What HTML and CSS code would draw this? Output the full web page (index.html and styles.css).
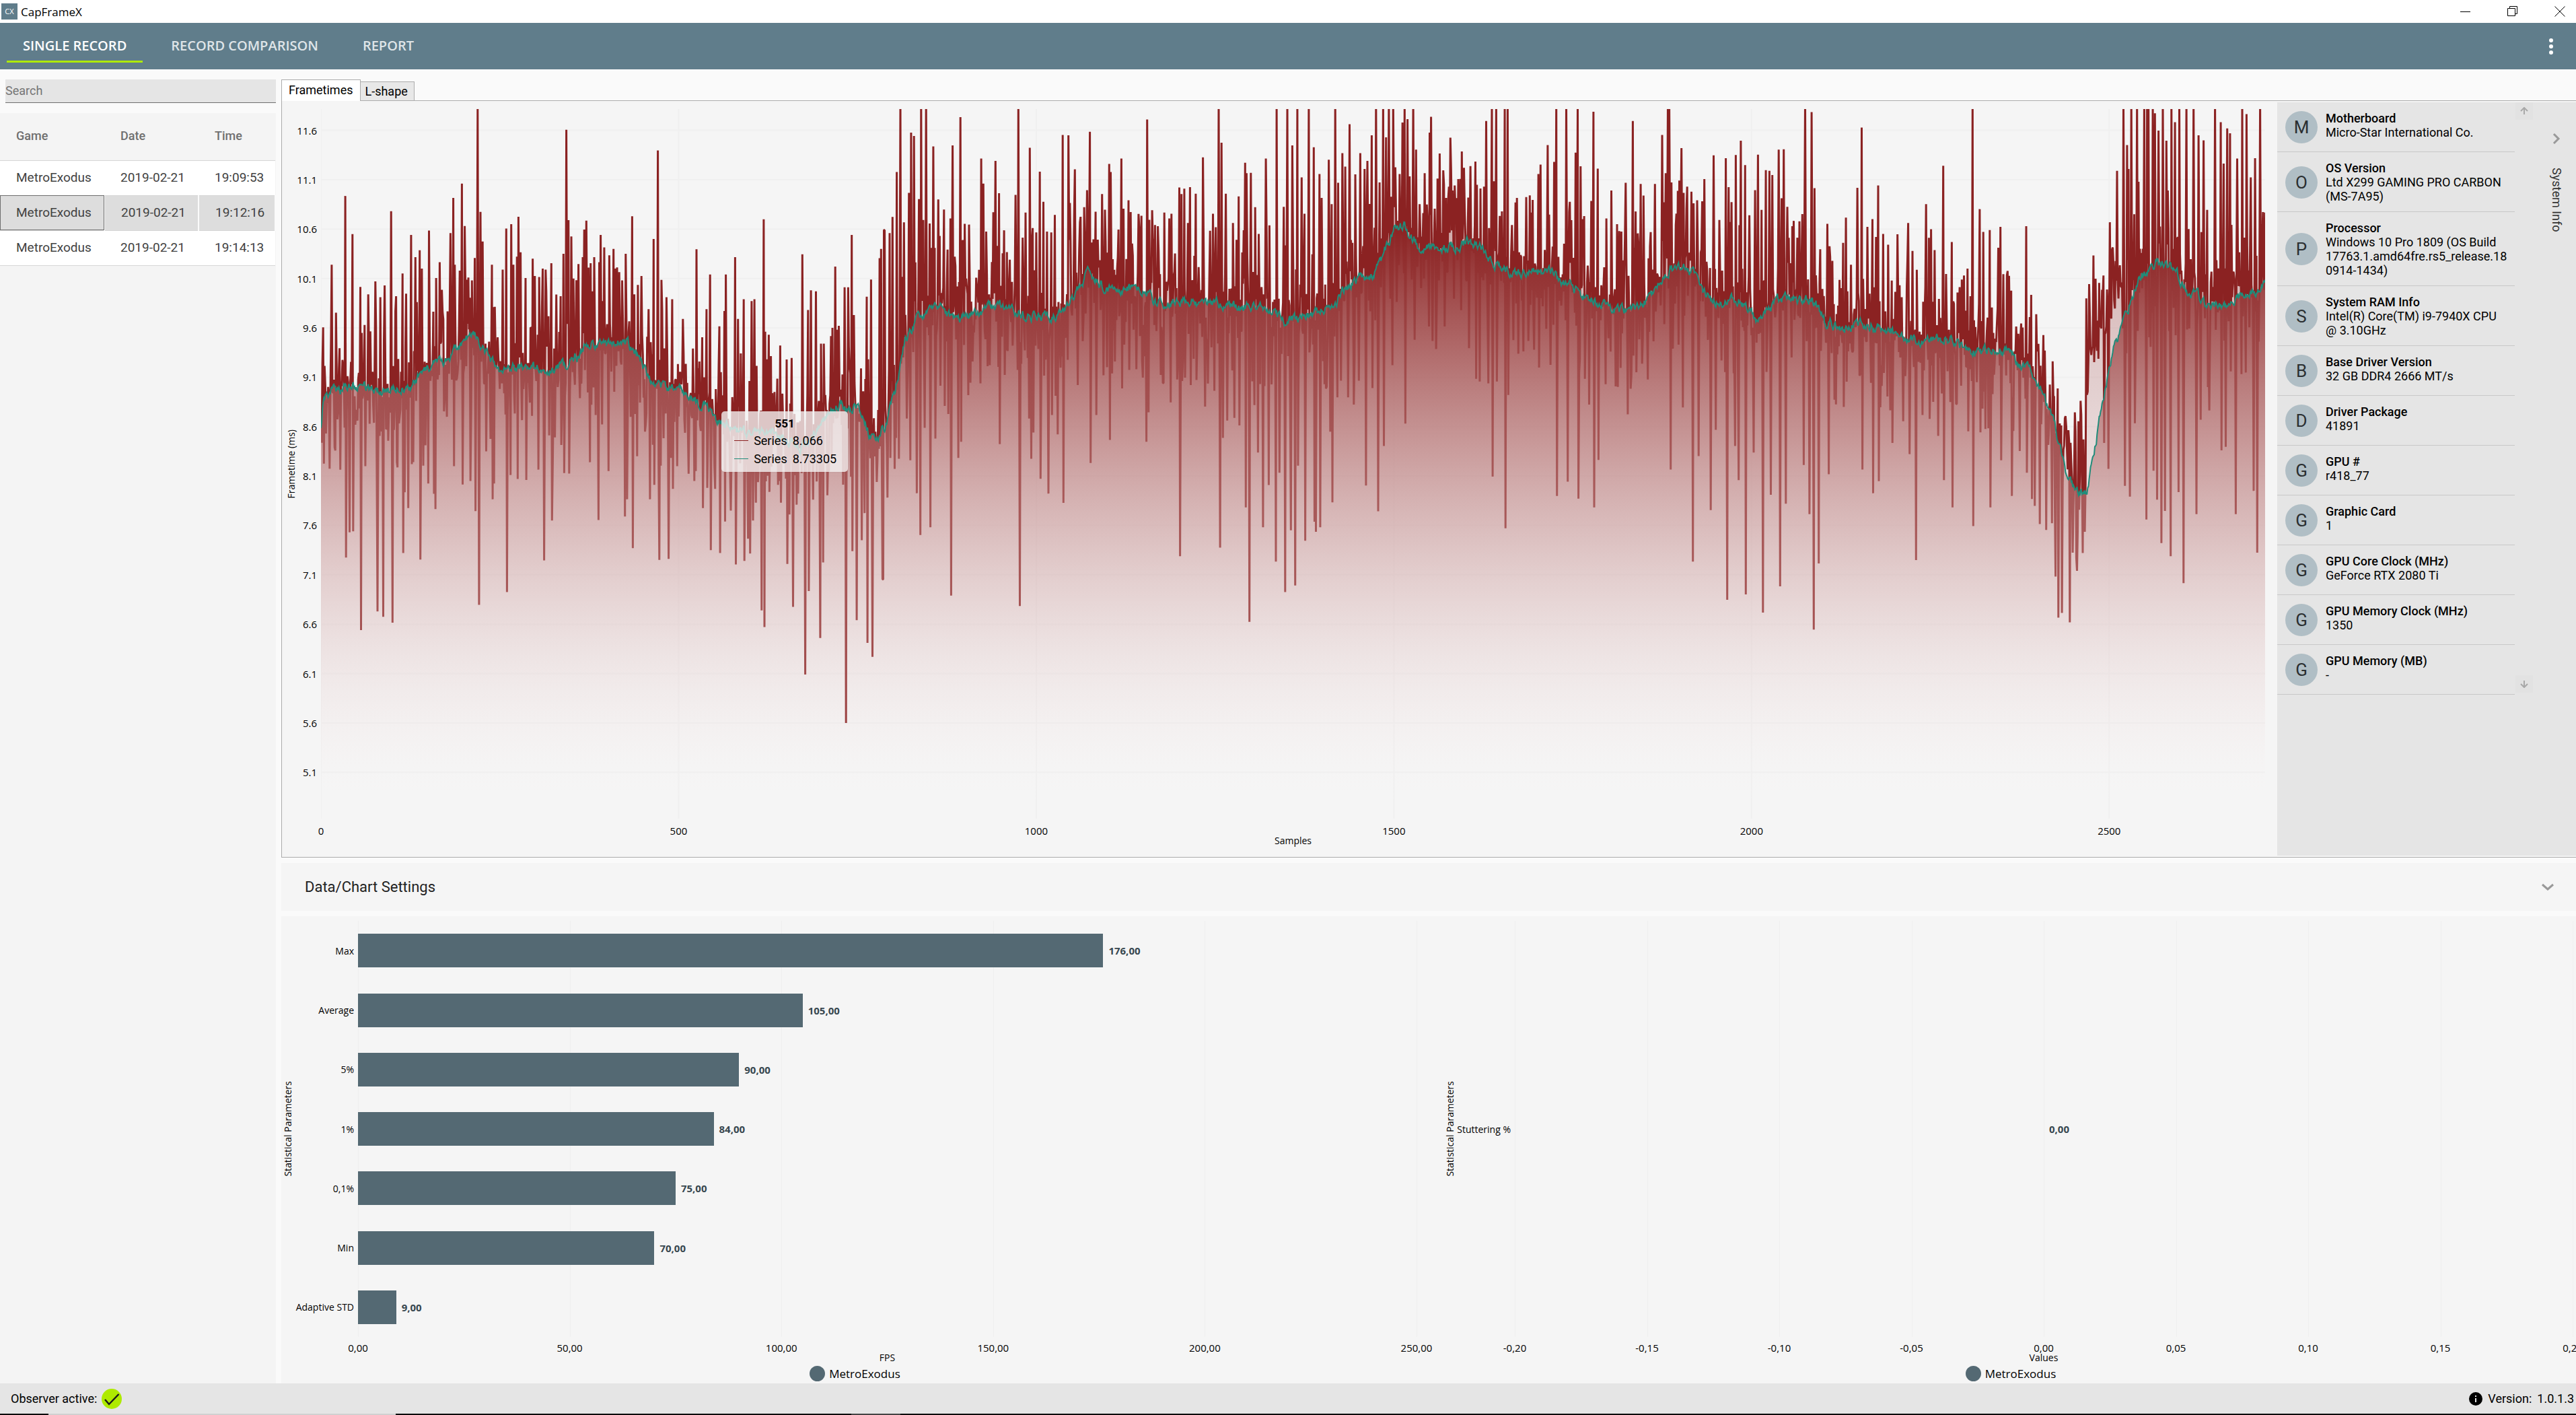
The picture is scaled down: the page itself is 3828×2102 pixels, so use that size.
FILE: index.html
```html
<!DOCTYPE html>
<html lang="en">
<head>
    <meta charset="UTF-8">
    <meta name="viewport" content="width=device-width, initial-scale=1.0">
    <title>CapFrameX</title>
    <link rel="stylesheet" href="styles.css">
</head>
<body>

<div class="titlebar">
    <span class="app-icon">CX</span>
    <span class="app-name">CapFrameX</span>
    <div class="window-buttons">
        <button aria-label="Minimize"><svg width="16" height="16" viewBox="0 0 16 16"><path d="M0 8.5h15"/></svg></button>
        <button aria-label="Restore"><svg width="16" height="16" viewBox="0 0 16 16"><path d="M.5 3.5h11v11H.5zM3.5 3.5v-3h11v11h-3"/></svg></button>
        <button aria-label="Close"><svg width="16" height="16" viewBox="0 0 16 16"><path d="M.5.5l15 15M15.5.5l-15 15"/></svg></button>
    </div>
</div>

<header class="header">
    <nav class="nav">
        <a href="#" class="nav-item active">SINGLE RECORD</a>
        <a href="#" class="nav-item">RECORD COMPARISON</a>
        <a href="#" class="nav-item">REPORT</a>
    </nav>
    <button class="menu-button" aria-label="Menu">
        <svg width="8" height="26" viewBox="0 0 8 26"><circle cx="4" cy="4" r="3"/><circle cx="4" cy="13" r="3"/><circle cx="4" cy="22" r="3"/></svg>
    </button>
</header>

<main class="main">
    <aside class="sidebar">
        <input type="text" class="search" placeholder="Search" aria-label="Search">
        <div class="records">
            <table class="record-table">
                <thead>
                    <tr><th class="col-game">Game</th><th class="col-date">Date</th><th>Time</th></tr>
                </thead>
                <tbody>
                    <tr><td>MetroExodus</td><td>2019-02-21</td><td>19:09:53</td></tr>
                    <tr class="selected"><td>MetroExodus</td><td>2019-02-21</td><td>19:12:16</td></tr>
                    <tr><td>MetroExodus</td><td>2019-02-21</td><td>19:14:13</td></tr>
                </tbody>
            </table>
        </div>
    </aside>

    <section class="content">
        <div class="tabs">
            <button class="tab active">Frametimes</button>
            <button class="tab">L-shape</button>
        </div>
        <div class="tab-panel">
            <div class="frame-chart">
                <div class="frame-axis"><span class="axis-title vertical">Frametime (ms)</span></div>
                <div class="plot" id="framePlot">
                    <svg class="plot-svg" viewBox="0 0 2889 1054" preserveAspectRatio="none">
                        <defs>
                            <linearGradient id="frameFill" gradientUnits="userSpaceOnUse" x1="0" y1="0" x2="0" y2="1054">
                                <stop offset="0" stop-color="#8b2222" stop-opacity="0.5"/>
                                <stop offset="1" stop-color="#fff" stop-opacity="0"/>
                            </linearGradient>
                            <linearGradient id="averageFill" gradientUnits="userSpaceOnUse" x1="0" y1="170" x2="0" y2="1054">
                                <stop offset="0" stop-color="#8b2222"/>
                                <stop offset="1" stop-color="#fff" stop-opacity="0"/>
                            </linearGradient>
                        </defs>
                        <path id="frameGrid" class="grid-line"/>
                        <path id="frameArea" fill="url(#frameFill)"/>
                        <path id="frameLine" class="frame-line"/>
                        <path id="averageArea" fill="url(#averageFill)"/>
                        <path id="averageLine" class="average-line"/>
                    </svg>
                    <div class="tooltip">
                        <div class="tooltip-title">551</div>
                        <div class="tooltip-row"><i class="swatch red"></i><span>Series</span><span>8.066</span></div>
                        <div class="tooltip-row"><i class="swatch teal"></i><span>Series</span><span>8.73305</span></div>
                    </div>
                </div>
                <div class="frame-bottom">
                    <div class="ticks" id="frameTicks"></div>
                    <div class="axis-title">Samples</div>
                </div>
            </div>

            <div class="system-info">
                <div class="info-list" id="infoList"></div>
                <div class="info-scroll">
                    <button aria-label="Scroll up"><svg width="12" height="12" viewBox="0 0 12 12"><path d="M6 11V2M1 6l5-5 5 5"/></svg></button>
                    <button aria-label="Scroll down"><svg width="12" height="12" viewBox="0 0 12 12"><path d="M6 1v9M1 6l5 5 5-5"/></svg></button>
                </div>
                <button class="info-toggle">
                    <svg width="12" height="18" viewBox="0 0 12 18"><path d="M2 2l7 7-7 7"/></svg>
                    <span>System Info</span>
                </button>
            </div>
        </div>

        <button class="settings">
            <span>Data/Chart Settings</span>
            <svg width="18" height="12" viewBox="0 0 18 12"><path d="M1 2l8 7 8-7"/></svg>
        </button>

        <div class="charts">
            <div class="bar-chart">
                <div class="bar-axis"><span class="axis-title vertical">Statistical Parameters</span></div>
                <div class="bars" id="fpsBars"></div>
                <div class="bar-bottom">
                    <div class="ticks" id="fpsTicks"></div>
                    <div class="axis-title">FPS</div>
                </div>
                <div class="legend"><i class="dot"></i>MetroExodus</div>
            </div>
            <div class="bar-chart stuttering">
                <div class="bar-axis"><span class="axis-title vertical">Statistical Parameters</span></div>
                <div class="bars" id="stutterBars"></div>
                <div class="bar-bottom">
                    <div class="ticks" id="stutterTicks"></div>
                    <div class="axis-title">Values</div>
                </div>
                <div class="legend"><i class="dot"></i>MetroExodus</div>
            </div>
        </div>
    </section>
</main>

<footer class="footer">
    <span>Observer active:</span>
    <svg width="30" height="30" viewBox="0 0 30 30"><circle cx="15" cy="15" r="15" fill="#aeea00"/><path d="M5 16l6 7L25.500 8" fill="none" stroke="#1b1b1b" stroke-width="2.500"/></svg>
    <div class="version">
        <svg width="20" height="20" viewBox="0 0 20 20"><circle cx="10" cy="10" r="10"/><path d="M9 5h2v2H9zM9 9h2v6H9z" fill="#e5e5e5"/></svg>
        <span>Version:</span><span>1.0.1.3</span>
    </div>
</footer>
<div class="taskbar"><i></i><i></i><i></i><i></i><i></i></div>

<script src="script.js"></script>
</body>
</html>
```
FILE: styles.css
```css
* {
    box-sizing: border-box;
}

body {
    margin: 0;
    height: 100vh;
    display: flex;
    flex-direction: column;
    overflow: hidden;
    background-color: #fafafa;
    color: #000;
    font-family: Roboto, sans-serif;
    font-size: 18px;
}

button {
    font: inherit;
    color: inherit;
    border: none;
    background: none;
    padding: 0;
    cursor: pointer;
}

svg {
    display: block;
}

/* Title bar */
.titlebar {
    height: 34px;
    flex-shrink: 0;
    display: flex;
    align-items: center;
    gap: 5px;
    padding: 0 16px 0 2px;
    background-color: #fff;
    font-family: "Open Sans", sans-serif;
    font-size: 17px;
}

.app-icon {
    width: 24px;
    height: 24px;
    line-height: 24px;
    text-align: center;
    background-color: #607d8b;
    color: #fff;
    font-size: 11px;
}

.window-buttons {
    margin-left: auto;
    display: flex;
    gap: 54px;
}

.window-buttons path {
    fill: none;
    stroke: #000;
}

/* Header */
.header {
    height: 69px;
    flex-shrink: 0;
    display: flex;
    justify-content: space-between;
    align-items: center;
    padding: 0 33px 0 10px;
    background-color: #607d8b;
}

.nav {
    display: flex;
    gap: 18px;
}

.nav-item {
    height: 49px;
    line-height: 48px;
    padding: 0 24px;
    border-bottom: 3px solid transparent;
    color: #dfe5e8;
    font-family: "Open Sans", sans-serif;
    font-size: 20px;
    font-weight: 600;
    text-decoration: none;
}

.nav-item.active {
    color: #fff;
    border-bottom-color: #aeea00;
}

.menu-button svg {
    fill: #fff;
}

.main {
    flex: 1;
    min-height: 0;
    display: flex;
    gap: 8px;
}

/* Record list */
.sidebar {
    width: 410px;
    flex-shrink: 0;
    display: flex;
    flex-direction: column;
    padding-top: 15px;
}

.search {
    height: 35px;
    margin: 0 0 15px 8px;
    padding: 0 0 2px;
    border: none;
    border-bottom: 1px solid #6e6e6e;
    border-radius: 0;
    background-color: #e5e5e5;
    font: inherit;
}

.search::placeholder {
    color: #757575;
}

.records {
    flex: 1;
    background-color: #f4f4f4;
}

.record-table {
    width: 100%;
    table-layout: fixed;
    border-collapse: collapse;
    color: #424242;
    font-size: 19px;
}

.record-table th {
    height: 70px;
    padding: 0 0 2px 24px;
    border-bottom: 1px solid #d6d6d6;
    color: #6f6f6f;
    font-size: 18px;
    font-weight: 500;
    text-align: left;
}

.record-table .col-game {
    width: 155px;
}

.record-table .col-date {
    width: 140px;
}

.record-table td {
    height: 52px;
    padding: 0 0 1px 24px;
    border-bottom: 1px solid #d6d6d6;
    background-color: #fff;
}

.record-table .selected td {
    background-color: #ddd;
    border-right: 2px solid #fafafa;
}

.record-table .selected td:first-child {
    outline: 1px solid #6e6e6e;
    outline-offset: -1px;
}

/* Tabs */
.content {
    flex: 1;
    min-width: 0;
    display: flex;
    flex-direction: column;
    padding-top: 15px;
}

.tabs {
    display: flex;
    align-items: flex-end;
    height: 31px;
    flex-shrink: 0;
}

.tab {
    height: 28px;
    padding: 0 9px 0 6px;
    border: 1px solid #acacac;
    border-left: none;
    border-bottom: none;
    background-color: #e8e8e8;
}

.tab.active {
    position: relative;
    height: 32px;
    margin-bottom: -1px;
    padding: 0 11px 3px 10px;
    border-left: 1px solid #acacac;
    background-color: #fff;
}

.tab-panel {
    flex: 34 1 0;
    min-height: 0;
    display: flex;
    border: 1px solid #acacac;
    border-right: none;
    background-color: #f5f5f5;
}

/* Frametime chart */
.frame-chart {
    flex: 1;
    display: grid;
    grid-template-columns: 58px 1fr;
    grid-template-rows: 1fr auto;
    padding: 12px 18px 17px 0;
}

.axis-title {
    font-family: "Open Sans", sans-serif;
    font-size: 14px;
    line-height: 14px;
    text-align: center;
}

.vertical {
    writing-mode: vertical-rl;
    transform: rotate(180deg);
}

.frame-axis,
.bar-axis {
    display: flex;
    align-items: center;
}

.frame-axis {
    padding-left: 7px;
}

.plot {
    position: relative;
    min-height: 0;
}

.plot-svg {
    position: absolute;
    width: 100%;
    height: 100%;
}

.grid-line {
    fill: none;
    stroke: #f0f0f0;
    stroke-width: 2;
}

.frame-line {
    fill: none;
    stroke: #8b2222;
    stroke-width: 3;
    stroke-linejoin: bevel;
}

.average-line {
    fill: none;
    stroke: #208c7a;
    stroke-width: 2;
}

.y-tick {
    position: absolute;
    right: 100%;
    margin-right: 6px;
    font-family: "Open Sans", sans-serif;
    font-size: 15px;
    line-height: 16px;
    transform: translateY(50%);
}

.frame-bottom,
.bar-bottom {
    grid-column: 2;
}

.ticks {
    position: relative;
    height: 24px;
    font-family: "Open Sans", sans-serif;
    font-size: 15px;
    line-height: 16px;
}

.ticks span {
    position: absolute;
    bottom: 0;
    transform: translateX(-50%);
}

.frame-bottom .ticks {
    height: 26px;
}

.tooltip {
    position: absolute;
    left: 20.6%;
    top: 42.6%;
    width: 188px;
    padding: 6px 0 6px 19px;
    border-radius: 5px;
    background-color: rgba(245, 245, 245, 0.78);
    box-shadow: 0 0 3px rgba(0, 0, 0, 0.1);
}

.tooltip-title {
    margin-left: -19px;
    line-height: 24px;
    font-size: 17px;
    font-weight: 700;
    text-align: center;
}

.tooltip-row {
    display: flex;
    align-items: center;
    gap: 8px;
    line-height: 27px;
}

.swatch {
    width: 21px;
    height: 1px;
}

.swatch.red {
    background-color: #8b2222;
}

.swatch.teal {
    background-color: #208c7a;
}

/* System info */
.system-info {
    width: 444px;
    flex-shrink: 0;
    display: flex;
    margin: 2px 0;
    background-color: #e5e5e5;
}

.info-list {
    width: 353px;
}

.info-item {
    display: flex;
    align-items: center;
    gap: 12px;
    padding: 13px 10px 12px 12px;
    border-bottom: 1px solid #c8c8c8;
    line-height: 21px;
}

.avatar {
    width: 48px;
    height: 48px;
    flex-shrink: 0;
    line-height: 48px;
    border-radius: 50%;
    background-color: #b0bec5;
    color: #2b2f31;
    font-size: 26px;
    text-align: center;
}

.info-text {
    align-self: flex-start;
    overflow-wrap: anywhere;
}

.info-text b {
    display: block;
    font-weight: 500;
}

.info-scroll {
    display: flex;
    flex-direction: column;
    justify-content: space-between;
    height: 877px;
    margin-left: 1px;
}

.info-scroll button {
    width: 26px;
    height: 26px;
    padding-left: 7px;
    background-color: #e2e2e2;
}

.info-scroll path {
    fill: none;
    stroke: #a8a8a8;
    stroke-width: 2;
}

.info-toggle {
    flex: 1;
    display: flex;
    flex-direction: column;
    align-items: center;
    gap: 34px;
    padding: 45px 0 0 6px;
    color: #333;
}

.info-toggle path,
.settings path {
    fill: none;
    stroke: #999;
    stroke-width: 3;
}

.info-toggle span {
    writing-mode: vertical-rl;
}

/* Settings expander */
.settings {
    height: 71px;
    flex-shrink: 0;
    display: flex;
    justify-content: space-between;
    align-items: center;
    margin: 8px 0;
    padding: 0 33px 0 35px;
    background-color: #f5f5f5;
    color: #222;
    font-size: 22px;
}

/* Bar charts */
.charts {
    flex: 21 1 0;
    min-height: 0;
    display: grid;
    grid-template-columns: 1fr 1fr;
    background-color: #f5f5f5;
}

.bar-chart {
    display: grid;
    grid-template-columns: 114px 1fr;
    grid-template-rows: 1fr auto auto;
    padding-top: 7px;
}

.bar-axis {
    padding-left: 3px;
}

.bars,
.bar-bottom {
    margin-right: 18px;
}

.bars {
    position: relative;
    display: flex;
    flex-direction: column;
}

.bars .grid-mark {
    position: absolute;
    top: 0;
    bottom: 0;
    width: 1px;
    background-color: #efefef;
}

.bar-row {
    position: relative;
    flex: 1;
    display: flex;
    align-items: center;
}

.bar-label {
    position: absolute;
    right: 100%;
    margin-right: 6px;
    font-family: "Open Sans", sans-serif;
    font-size: 14px;
    white-space: nowrap;
}

.bar {
    height: 50px;
    background-color: #546973;
}

.bar-value {
    margin-left: 8px;
    color: #37474f;
    font-family: "Open Sans", sans-serif;
    font-size: 15px;
    font-weight: 700;
}

.bar-bottom .axis-title {
    height: 15px;
}

.legend {
    grid-column: 1 / -1;
    height: 30px;
    display: flex;
    justify-content: center;
    align-items: center;
    gap: 6px;
    font-family: "Open Sans", sans-serif;
    font-size: 17px;
}

.dot {
    width: 23px;
    height: 23px;
    border-radius: 50%;
    background-color: #546973;
}

.stuttering {
    margin-left: 25px;
    grid-template-columns: 103px 1fr;
}

.stuttering .bar-axis {
    padding-left: 0;
}

.stuttering .bars,
.stuttering .bar-bottom {
    margin-right: 5px;
}

/* Status bar */
.footer {
    height: 45px;
    flex-shrink: 0;
    display: flex;
    align-items: center;
    gap: 7px;
    padding: 0 3px 0 16px;
    background-color: #e5e5e5;
}

.version {
    margin-left: auto;
    display: flex;
    align-items: center;
    gap: 8px;
}

.taskbar {
    height: 2px;
    flex-shrink: 0;
    display: flex;
    background-color: #fff;
}

.taskbar i {
    width: 72px;
    background-color: #0a0a0a;
}

.taskbar i:nth-child(2) {
    width: 516px;
    background-color: #d0d0d0;
}

.taskbar i:nth-child(3) {
    width: 677px;
}

.taskbar i:nth-child(4) {
    width: 73px;
    background-color: #444;
}

.taskbar i:nth-child(5) {
    flex: 1;
}
```
FILE: script.js
```js
const SAMPLES = 2718;
const PLOT_W = 2889;
const PLOT_H = 1054;
const MS_TOP = 11.815;
const MS_PX = 146.7;

// The capture is stored in three segments, each with its own grid:
// sample = start + (x - x0) / sx, ms = 11.6 - (y - y0) / sy
const segments = [
    {
        start: 0, x0: 100, sx: 1.852, y0: 88, sy: 200,
        average: [100,690,106,635,130,612,150,615,200,605,240,615,330,608,360,582,390,560,430,560,445,535,470,520,485,497,503,505,515,525,540,555,565,578,600,568,660,570,710,570,735,560,770,543,790,522,860,525,885,513,905,530,935,565,960,602,1000,612,1050,622,1070,637,1100,645,1130,672,1180,695,1230,700,1280,702,1310,720,1340,730,1370,715,1385,690,1410,670,1445,640,1465,655,1490,645,1505,670,1518,700,1533,720,1552,695],
        peaks: [106,487,127,360,163,221,181,298,202,405,222,420,240,394,253,426,264,402,281,252,294,424,312,378,320,419,333,300,344,345,355,331,361,368,379,291,398,387,407,355,435,296,442,225,447,360,465,196,472,282,481,386,491,392,506,45,513,253,518,313,543,360,570,370,580,287,592,278,598,360,607,344,611,263,616,335,629,387,648,348,653,383,664,385,674,368,682,370,697,357,720,424,728,338,735,87,741,270,748,303,754,388,766,359,777,345,782,289,787,271,798,357,807,345,820,355,825,300,833,325,846,341,857,328,872,375,880,392,889,338,905,262,912,420,920,401,930,383,949,450,961,308,972,129,981,391,994,426,1009,430,1037,470,1072,329,1087,507,1098,450,1107,380,1132,485,1145,454,1149,380,1172,345,1180,470,1194,430,1215,434,1222,430,1246,268,1251,496,1259,502,1289,524,1305,552,1318,549,1346,339,1361,452,1368,412,1382,414,1395,520,1424,488,1431,364,1441,484,1456,406,1465,406,1474,300,1480,462,1499,570,1513,425,1524,390,1546,347,1550,328,1558,290],
        dips: [107,763,122,773,135,730,165,953,174,902,183,900,204,1100,215,768,246,1062,261,1073,285,1085,295,760,311,944,317,821,326,853,335,764,358,957,365,767,378,803,392,824,396,855,426,668,444,768,466,805,487,798,500,859,509,1049,528,738,545,835,548,803,581,1023,590,786,610,794,631,796,663,775,677,959,696,878,700,762,730,782,742,783,796,760,818,877,844,778,887,870,892,835,907,934,919,748,952,835,963,806,976,958,1000,956,1011,814,1023,768,1067,798,1089,853,1100,812,1109,938,1120,814,1133,944,1146,880,1161,858,1174,967,1196,960,1205,915,1211,945,1218,878,1226,842,1241,1060,1248,1094,1261,820,1291,842,1307,966,1313,866,1322,1053,1332,846,1354,1190,1363,1021,1374,836,1392,1116,1401,963,1412,827,1459,1288,1476,940,1488,1080,1500,918,1508,863,1514,1126,1527,1154,1539,800,1554,997]
    },
    {
        start: 1000, x0: 362, sx: 1.602, y0: 112, sy: 255.6,
        average: [22,885,45,790,68,660,95,605,120,575,145,568,175,600,225,590,262,565,300,572,330,592,410,595,440,545,478,483,510,512,540,535,570,520,605,533,635,563,700,555,730,563,790,562,815,573,860,562,890,580,920,610,960,590,1025,572,1055,515,1090,490,1110,500,1135,440,1165,368,1185,360,1220,415,1300,415,1325,400,1360,415,1390,460,1435,487,1480,477,1520,482],
        peaks: [21,370,34,378,40,336,50,220,58,40,66,350,77,274,82,118,88,127,99,290,104,40,109,344,116,40,124,353,132,154,143,291,155,317,170,340,175,151,192,78,201,354,212,356,239,185,244,250,250,374,266,324,271,191,279,275,287,430,302,447,316,279,322,40,332,390,338,325,348,157,354,365,362,376,370,219,378,297,386,374,395,376,403,331,422,124,434,125,438,300,449,213,462,336,469,311,475,267,482,116,490,394,500,395,510,277,525,199,529,220,547,369,552,185,558,315,568,293,577,405,593,364,611,84,622,319,634,360,649,325,660,340,665,328,683,260,688,277,693,263,702,352,707,259,720,276,736,182,752,372,758,328,771,40,777,144,787,276,803,352,816,283,829,196,833,223,842,222,852,311,861,380,877,185,885,358,901,40,917,310,925,40,936,151,946,40,957,234,962,328,973,40,984,156,997,225,1001,287,1018,188,1023,303,1031,40,1038,248,1048,171,1054,206,1064,96,1077,226,1087,171,1097,212,1103,191,1113,125,1123,40,1131,247,1139,40,1146,130,1151,40,1162,40,1166,208,1176,225,1182,92,1187,40,1194,83,1207,40,1212,162,1232,223,1243,118,1247,77,1260,237,1266,172,1275,253,1289,131,1299,255,1307,238,1315,167,1320,209,1329,286,1345,193,1349,253,1365,258,1369,88,1382,40,1387,244,1392,40,1405,322,1411,40,1417,40,1428,357,1460,285,1474,292,1486,225,1491,201,1507,150,1511,330,1522,194,1527,40],
        dips: [17,1274,35,960,45,988,55,962,72,858,80,966,94,1051,103,1159,112,882,125,1139,136,910,147,773,155,825,165,846,171,1316,187,960,194,918,215,765,237,767,258,720,280,924,292,745,325,1343,346,858,350,962,355,894,372,1014,390,1052,396,849,410,899,423,1076,455,771,484,973,497,849,513,746,526,913,532,741,553,780,568,732,601,752,609,918,614,842,640,745,663,816,684,1214,694,752,708,771,721,758,740,827,761,786,774,1192,780,908,789,863,805,856,817,876,830,1088,840,1384,851,823,858,946,870,1139,882,1030,898,1228,907,998,920,1307,932,1147,942,1290,949,980,963,1174,983,1125,989,1151,998,1139,1008,769,1020,892,1026,1075,1036,803,1045,760,1060,803,1074,822,1084,760,1100,1031,1114,779,1127,1098,1141,929,1160,720,1188,871,1210,654,1249,657,1257,678,1332,676,1348,755,1356,762,1374,767,1383,1008,1393,762,1413,1142,1420,797,1431,655,1488,726,1514,719,1529,1058]
    },
    {
        start: 2000, x0: 419, sx: 1.572, y0: 112, sy: 255.6,
        average: [0,505,25,512,45,540,100,565,150,578,200,548,215,515,240,475,265,465,288,475,305,520,330,548,350,565,370,548,400,560,425,600,450,590,475,550,520,545,560,560,580,607,625,625,665,612,720,630,760,648,800,662,820,648,860,655,885,678,920,690,945,675,985,688,1005,718,1030,722,1065,810,1085,880,1105,975,1130,1045,1155,1050,1170,960,1190,815,1215,680,1240,595,1270,498,1310,452,1355,480,1380,535,1400,540,1420,572,1460,565,1500,535,1535,530,1550,490],
        peaks: [12,40,20,297,33,170,37,40,43,205,51,334,67,295,72,64,81,211,100,340,111,268,124,355,143,248,158,88,165,322,176,251,181,281,207,251,222,124,230,223,235,40,239,40,243,247,261,242,265,158,269,274,278,258,287,271,300,293,311,296,316,238,336,177,349,344,362,184,369,259,375,298,385,176,395,139,405,202,415,332,427,267,433,175,441,318,451,215,459,217,465,228,479,162,485,288,490,161,498,310,508,360,520,390,531,329,537,40,551,65,558,262,570,420,586,354,596,450,620,403,627,338,638,460,652,261,661,105,674,362,684,342,693,388,698,255,709,380,720,408,739,381,764,352,773,424,782,473,803,303,809,390,814,368,822,422,841,204,847,484,859,401,886,488,893,470,904,40,921,316,928,375,943,370,961,416,966,362,981,476,989,527,1011,612,1023,360,1034,538,1046,684,1051,732,1061,642,1064,682,1092,780,1099,876,1106,928,1116,888,1130,842,1137,865,1142,812,1149,912,1155,547,1161,510,1170,436,1175,496,1183,507,1192,488,1201,524,1206,350,1215,460,1222,217,1237,40,1244,150,1248,212,1254,40,1266,40,1269,245,1282,40,1289,40,1292,40,1301,40,1306,68,1314,113,1323,40,1331,139,1342,40,1350,91,1359,40,1374,40,1391,40,1402,125,1413,138,1421,318,1437,40,1451,91,1456,198,1465,107,1471,120,1487,185,1498,40,1507,70,1517,234,1525,184,1536,40,1548,325],
        dips: [15,1021,39,1065,53,755,62,822,73,1088,83,965,98,769,125,776,147,847,165,738,241,990,268,829,290,1228,303,955,330,1095,341,887,366,1327,383,929,391,1017,407,1313,424,946,444,1360,461,1055,482,1292,495,1078,534,978,546,1105,555,1404,567,1233,588,1002,602,809,621,828,663,990,685,1051,699,1020,718,801,728,921,752,865,767,950,780,1224,795,849,829,903,842,1017,861,1088,894,891,905,1136,927,832,944,1088,968,966,990,1058,1009,942,1025,998,1033,1066,1042,1084,1051,1131,1066,1146,1080,1129,1087,1267,1094,1373,1102,1361,1119,1385,1125,1205,1134,1252,1147,1206,1152,1151,1193,921,1204,988,1240,1032,1251,1060,1262,870,1286,1119,1303,993,1311,1068,1319,1180,1328,1097,1340,1214,1357,1048,1369,1284,1396,1105,1406,861,1425,837,1450,940,1462,931,1484,1105,1523,1045,1531,1205]
    }
];

function readPoints(segment, list) {
    const points = [];
    for (let i = 0; i < list.length; i += 2) {
        points.push([
            Math.round(segment.start + (list[i] - segment.x0) / segment.sx),
            11.6 - (list[i + 1] - segment.y0) / segment.sy
        ]);
    }
    return points;
}

// Small seeded generator, so the chart is the same on every load
let seed = 551;
function random() {
    seed = (seed * 1664525 + 1013904223) % 4294967296;
    return seed / 4294967296;
}

const averagePoints = segments.flatMap(s => readPoints(s, s.average));

function averageAt(sample) {
    let i = 1;
    while (i < averagePoints.length - 1 && averagePoints[i][0] < sample) i++;
    const [s0, v0] = averagePoints[i - 1];
    const [s1, v1] = averagePoints[i];
    return v0 + (v1 - v0) * Math.min(1, Math.max(0, (sample - s0) / (s1 - s0)));
}

function spread(amount, limit) {
    return Math.min(limit, -Math.log(1 - random()) * amount);
}

const frames = [];
const average = [];
let drift = 0;
for (let i = 0; i <= SAMPLES; i++) {
    drift = drift * 0.6 + (random() - 0.5) * 0.08;
    const base = averageAt(i);
    average.push(base + drift);

    if (i > 2468 && i < 2519) {
        frames.push(8.9 + (i - 2468) * 0.022 + spread(0.25, 0.7));
    } else if (random() < 0.5) {
        frames.push(base + 0.03 + spread(0.26, 0.75));
    } else {
        frames.push(base - spread(0.26, 0.8));
    }
}

const taken = new Set();
segments.forEach(s => {
    [...readPoints(s, s.peaks), ...readPoints(s, s.dips)].forEach(([sample, ms]) => {
        while (taken.has(sample)) sample++;
        taken.add(sample);
        if (sample <= SAMPLES) frames[sample] = ms;
    });
});

const toX = sample => (sample / SAMPLES * PLOT_W).toFixed(1);
const toY = ms => ((MS_TOP - ms) * MS_PX).toFixed(1);

function linePath(values) {
    return 'M' + values.map((v, i) => toX(i) + ' ' + toY(v)).join('L');
}

function areaPath(values) {
    return linePath(values) + `L${PLOT_W} ${PLOT_H}L0 ${PLOT_H}Z`;
}

function setPath(id, d) {
    document.getElementById(id).setAttribute('d', d);
}

setPath('frameArea', areaPath(frames));
setPath('frameLine', linePath(frames));
setPath('averageArea', areaPath(average));
setPath('averageLine', linePath(average));

// Axes of the frametime chart
const framePlot = document.getElementById('framePlot');
let grid = '';
for (let ms = 5.1; ms < 11.7; ms += 0.5) {
    grid += `M0 ${toY(ms)}H${PLOT_W}`;
    const label = document.createElement('span');
    label.className = 'y-tick';
    label.textContent = ms.toFixed(1);
    label.style.bottom = (100 - toY(ms) / PLOT_H * 100) + '%';
    framePlot.appendChild(label);
}
for (let s = 0; s <= 2500; s += 500) {
    grid += `M${toX(s)} 0V${PLOT_H}`;
}
setPath('frameGrid', grid);

function renderTicks(id, ticks) {
    document.getElementById(id).innerHTML = ticks
        .map(([text, at]) => `<span style="left:${at}%">${text}</span>`)
        .join('');
}

renderTicks('frameTicks', [0, 500, 1000, 1500, 2000, 2500].map(s => [s, s / SAMPLES * 100]));

// Bar charts
function format(value) {
    return value.toFixed(2).replace('.', ',');
}

function renderBars(id, rows, min, max, ticks) {
    const place = v => (v - min) / (max - min) * 100;
    document.getElementById(id + 'Bars').innerHTML =
        ticks.map(t => `<i class="grid-mark" style="left:${place(t)}%"></i>`).join('') +
        rows.map(([name, value]) => `<div class="bar-row">
            <span class="bar-label">${name}</span>
            <div class="bar" style="margin-left:${place(0)}%;width:${place(value) - place(0)}%"></div>
            <span class="bar-value">${format(value)}</span>
        </div>`).join('');
    renderTicks(id + 'Ticks', ticks.map(t => [format(t), place(t)]));
}

renderBars('fps', [
    ['Max', 176],
    ['Average', 105],
    ['5%', 90],
    ['1%', 84],
    ['0,1%', 75],
    ['Min', 70],
    ['Adaptive STD', 9]
], 0, 250, [0, 50, 100, 150, 200, 250]);

renderBars('stutter', [['Stuttering %', 0]], -0.2, 0.2,
    [-0.2, -0.15, -0.1, -0.05, 0, 0.05, 0.1, 0.15, 0.2]);

// System info
const info = [
    ['Motherboard', 'Micro-Star International Co.'],
    ['OS Version', 'Ltd X299 GAMING PRO CARBON (MS-7A95)'],
    ['Processor', 'Windows 10 Pro 1809 (OS Build 17763.1.amd64fre.rs5_release.180914-1434)'],
    ['System RAM Info', 'Intel(R) Core(TM) i9-7940X CPU @ 3.10GHz'],
    ['Base Driver Version', '32 GB DDR4 2666 MT/s'],
    ['Driver Package', '41891'],
    ['GPU #', 'r418_77'],
    ['Graphic Card', '1'],
    ['GPU Core Clock (MHz)', 'GeForce RTX 2080 Ti'],
    ['GPU Memory Clock (MHz)', '1350'],
    ['GPU Memory (MB)', '-']
];

document.getElementById('infoList').innerHTML = info.map(([name, value]) => `
    <div class="info-item">
        <span class="avatar">${name[0]}</span>
        <div class="info-text"><b>${name}</b>${value}</div>
    </div>`).join('');
```
